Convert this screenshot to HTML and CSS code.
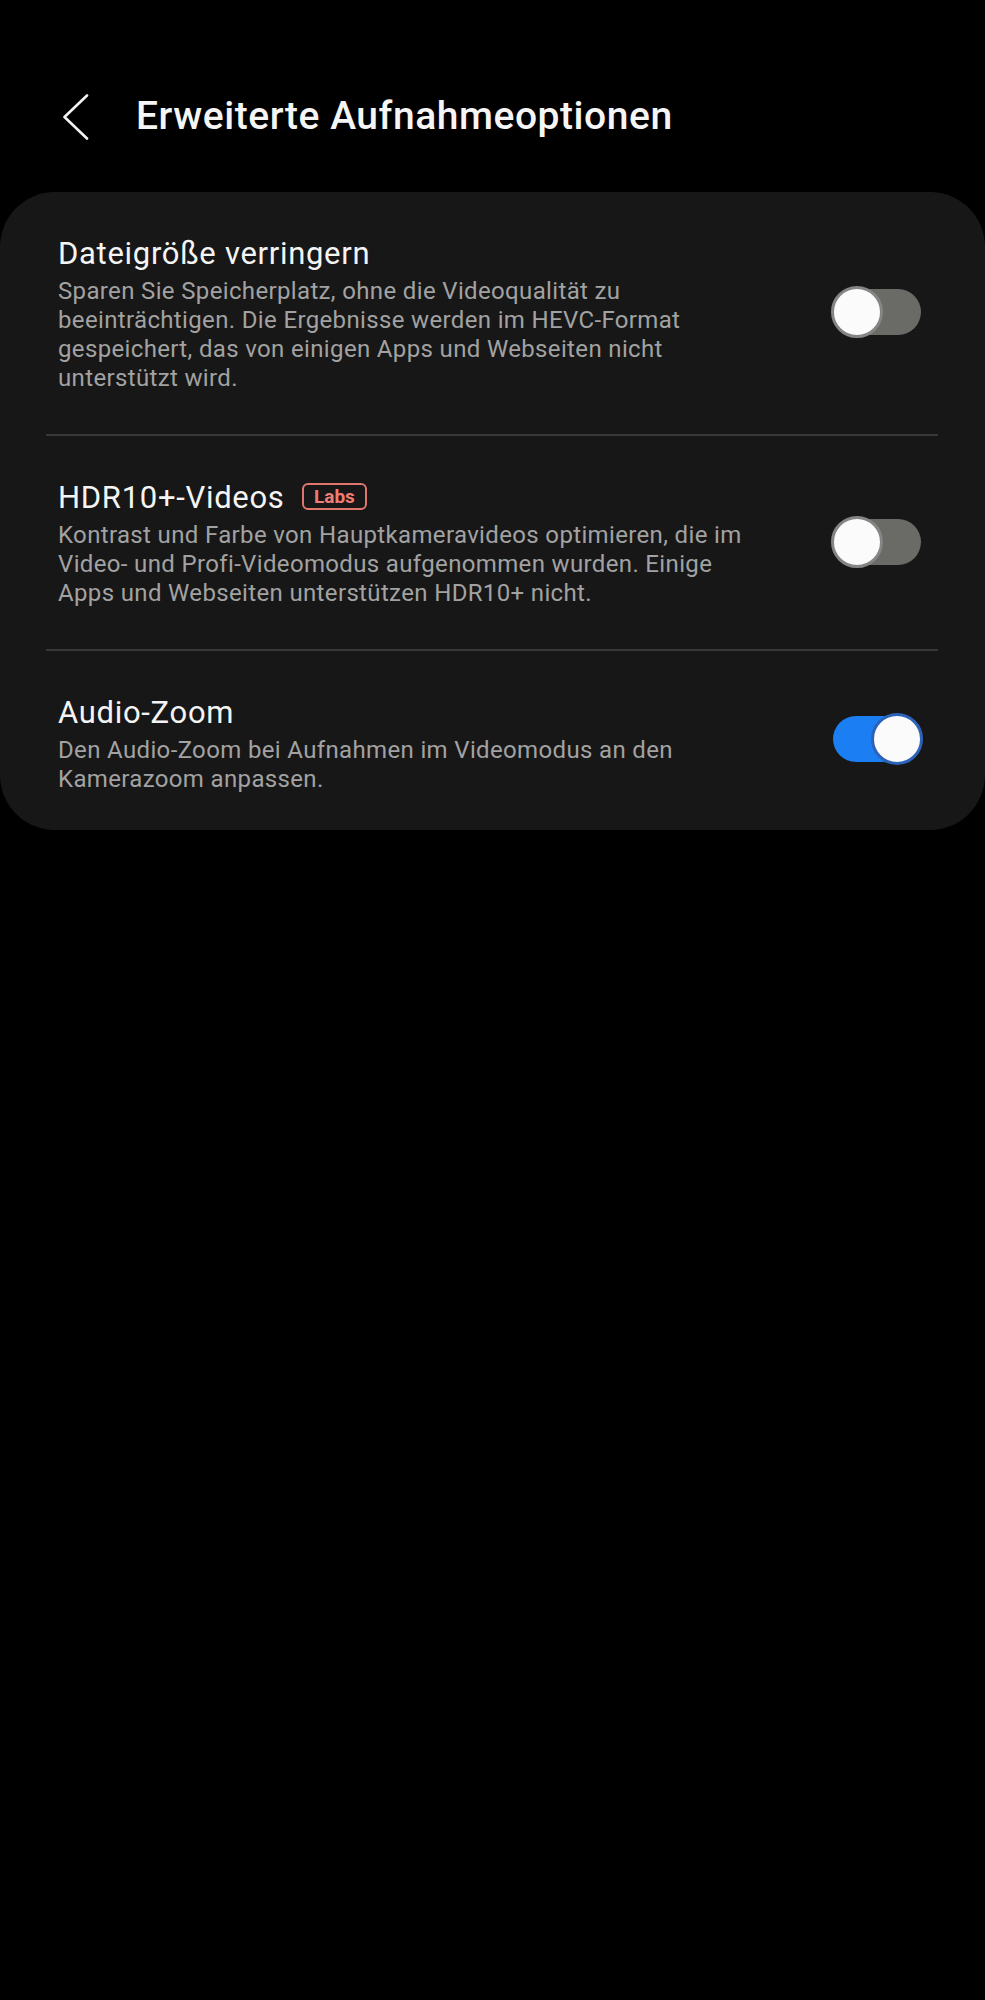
FILE: index.html
```html
<!DOCTYPE html>
<html lang="de">
<head>
<meta charset="utf-8">
<title>Erweiterte Aufnahmeoptionen</title>
<link rel="stylesheet" href="styles.css">
</head>
<body>
<header class="appbar">
  <svg class="back" width="26" height="46" viewBox="0 0 26 46" aria-hidden="true">
    <polyline points="24,1.5 1.5,23 24,44.5" fill="none" stroke="#f2f2f2" stroke-width="2.6" stroke-linecap="round" stroke-linejoin="round"/>
  </svg>
  <h1 class="appbar-title">Erweiterte Aufnahmeoptionen</h1>
</header>

<main class="card">
  <section class="row">
    <div class="row-text">
      <div class="row-title">Dateigröße verringern</div>
      <div class="row-desc">Sparen Sie Speicherplatz, ohne die Videoqualität zu beeinträchtigen. Die Ergebnisse werden im HEVC-Format gespeichert, das von einigen Apps und Webseiten nicht unterstützt wird.</div>
    </div>
    <div class="switch"><span class="track"></span><span class="thumb"></span></div>
  </section>
  <div class="divider"></div>
  <section class="row">
    <div class="row-text">
      <div class="row-title">HDR10+-Videos <span class="badge">Labs</span></div>
      <div class="row-desc">Kontrast und Farbe von Hauptkameravideos optimieren, die im Video- und Profi-Videomodus aufgenommen wurden. Einige Apps und Webseiten unterstützen HDR10+ nicht.</div>
    </div>
    <div class="switch"><span class="track"></span><span class="thumb"></span></div>
  </section>
  <div class="divider"></div>
  <section class="row row-last">
    <div class="row-text">
      <div class="row-title">Audio-Zoom</div>
      <div class="row-desc">Den Audio-Zoom bei Aufnahmen im Videomodus an den Kamerazoom anpassen.</div>
    </div>
    <div class="switch is-on"><span class="track"></span><span class="thumb"></span></div>
  </section>
</main>
</body>
</html>
```

FILE: styles.css
```css
html, body {
  margin: 0;
  padding: 0;
  background: #000;
}

body {
  font-family: Roboto, "Noto Sans", "Liberation Sans", sans-serif;
  color: #f2f2f2;
  min-height: 2000px;
}

.appbar {
  box-sizing: border-box;
  height: 192px;
  padding: 41px 0 0 63px;
  display: flex;
  align-items: center;
}

.back {
  display: block;
  flex: none;
}

.appbar-title {
  margin: 0 0 0 47px;
  font-size: 39px;
  line-height: 39px;
  font-weight: 500;
  color: #f5f5f5;
  letter-spacing: 0.55px;
}

.card {
  display: block;
  background: #171717;
  border-radius: 55px;
}

.row {
  display: flex;
  align-items: center;
  justify-content: space-between;
  padding: 44px 64px 41px 58px;
}

.row-last {
  padding-bottom: 36px;
}

.row-text {
  flex: 0 1 694px;
  max-width: 694px;
}

.row-title {
  font-size: 31px;
  line-height: 36px;
  font-weight: 400;
  color: #f4f4f4;
  letter-spacing: 0.7px;
  margin-bottom: 5px;
}

.row-desc {
  font-size: 24px;
  line-height: 29px;
  color: #a2a2a2;
  letter-spacing: 0.35px;
}

.badge {
  display: inline-block;
  margin-left: 9px;
  padding: 0 10px;
  border: 2px solid #e0776f;
  border-radius: 6px;
  color: #f07d74;
  font-size: 19px;
  line-height: 23px;
  font-weight: 700;
  letter-spacing: 0;
  vertical-align: 5px;
}

.divider {
  height: 2px;
  margin: 0 47px 0 46px;
  background: #383838;
}

.switch {
  position: relative;
  flex: none;
  width: 88px;
  height: 52px;
  margin-top: -5px;
}

.row-last .switch {
  margin-top: -11px;
}

.track {
  position: absolute;
  left: 0;
  top: 3px;
  width: 88px;
  height: 46px;
  border-radius: 23px;
  background: #6a6a66;
}

.thumb {
  position: absolute;
  top: 0;
  left: -2px;
  box-sizing: border-box;
  width: 52px;
  height: 52px;
  border-radius: 50%;
  background: #fbfbfb;
  border: 3px solid #858585;
}

.is-on .track {
  background: #1b7ef2;
}

.is-on .thumb {
  left: 38px;
  border-color: #2c62b8;
}
```
